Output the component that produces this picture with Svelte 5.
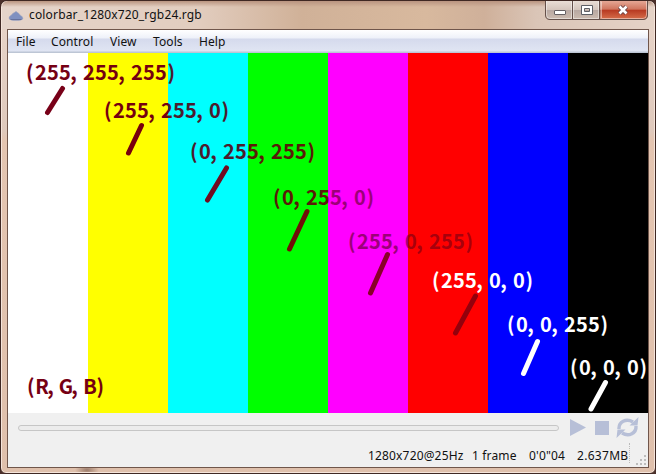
<script>
  const menus = [
    { name: 'File', w: 35 },
    { name: 'Control', w: 59 },
    { name: 'View', w: 43 },
    { name: 'Tools', w: 46 },
    { name: 'Help', w: 40 }
  ];
  const bars = ['#ffffff', '#ffff00', '#00ffff', '#00ff00', '#ff00ff', '#ff0000', '#0000ff', '#000000'];
  const inks = ['#750014', '#740010', '#4c1c2c', '#5a1a08', '#9c0078', '#a8000c', '#ffffff', '#ffffff'];
  const cell = 12;
  const labels = [
    { text: '(255,255,255)', x: 15, y: 27, line: [54.5, 35.5, 39.5, 59.5], ink: '#780018' },
    { text: '(255,255,0)', x: 93, y: 65, line: [133.5, 72.5, 120.5, 100], ink: '#78000c' },
    { text: '(0,255,255)', x: 179, y: 106, line: [218.5, 115, 199.5, 147], ink: '#700c20' },
    { text: '(0,255,0)', x: 262, y: 152, line: [299, 158.5, 281.5, 196], ink: '#701008' },
    { text: '(255,0,255)', x: 337, y: 196, line: [379.5, 201.5, 362.5, 240], ink: '#880028' },
    { text: '(255,0,0)', x: 421, y: 235, line: [467.5, 243, 447.5, 280], ink: '#94000c', white: true },
    { text: '(0,0,255)', x: 496, y: 279, line: [529.5, 288.5, 515.5, 320.5], ink: '#fff', white: true },
    { text: '(0,0,0)', x: 559, y: 322, line: [597.5, 329.5, 583, 356], ink: '#fff', white: true },
    { text: '(R,G,B)', x: 16, y: 341 }
  ];
  const nudge = { '(': 0.8, ')': -1.6, ',': -3.4 };
  const xs = (l) => [...l.text].map((c, i) => l.x + i * cell + 6 + (nudge[c] ?? 0)).join(' ');
</script>

<div class="window">
  <header class="title">
    <svg class="app" width="16" height="12" viewBox="0 0 16 12">
      <path d="M1 8.500 Q.5 6.500 3.500 5 Q4.500 3 6.500 2.500 Q8 .5 9.500 2.500 Q11 3 12 5 Q15 6.500 15 8.500 Q14.500 10.500 8 10.500 Q1.500 10.500 1 8.500Z" fill="#7f90c0" stroke="#a3a6c0" stroke-width=".6" />
      <path d="M2.500 9.500H13.500" stroke="#66719c" fill="none" />
    </svg>
    <span class="name">colorbar_1280x720_rgb24.rgb</span>
    <svg class="buttons" width="105" height="22" viewBox="0 0 105 22">
      <defs>
        <linearGradient id="plain" x2="0" y2="1">
          <stop offset="0" stop-color="#e9ddd5" /><stop offset=".46" stop-color="#d5c6bd" />
          <stop offset=".5" stop-color="#b8a8a2" /><stop offset="1" stop-color="#cdbcb0" />
        </linearGradient>
        <linearGradient id="close" x2="0" y2="1">
          <stop offset="0" stop-color="#e5a795" /><stop offset=".44" stop-color="#d0765f" />
          <stop offset=".5" stop-color="#b83a22" /><stop offset="1" stop-color="#d8704c" />
        </linearGradient>
      </defs>
      <path d="M1.500 0V14Q1.500 18.500 6 18.500H99Q103.500 18.500 103.500 14V0Z" fill="url(#plain)" />
      <path d="M56.500 0H103.500V14Q103.500 18.500 99 18.500H56.500Z" fill="url(#close)" />
      <path d="M2.500 0V14Q2.500 17.500 6 17.500H27.500V.5M29.500 .5V17.500H54.500V.5M57.500 .5V17.500H99Q102.500 17.500 102.500 14V0" fill="none" stroke="#fff" stroke-opacity=".45" />
      <path d="M1.500 0V14Q1.500 18.500 6 18.500H99Q103.500 18.500 103.500 14V0M28.500 0V18M55.500 0V18" fill="none" stroke="#65504a" />
      <rect x="10.500" y="9.500" width="11" height="4" rx=".5" fill="#fff" stroke="#655f62" />
      <path fill-rule="evenodd" d="M37.500 4.500H48.500V13.500H37.500ZM40.500 7.500V10.500H45.500V7.500Z" fill="#fff" stroke="#5d5f65" />
      <path d="M75.500 5.500L82.500 12.500M82.500 5.500L75.500 12.500" stroke="#6c4546" stroke-width="4.500" />
      <path d="M75.500 5.500L82.500 12.500M82.500 5.500L75.500 12.500" stroke="#fff" stroke-width="2.600" />
    </svg>
  </header>

  <main class="client">
    <nav>
      {#each menus as m}<span style:width="{m.w}px">{m.name}</span>{/each}
    </nav>

    <svg class="video" width="640" height="360" viewBox="0 0 640 360">
      <defs>
        <linearGradient id="ink" gradientUnits="userSpaceOnUse" x1="0" x2="640" y1="0" y2="0">
          {#each inks as c, i}
            <stop offset={i / 8} stop-color={c} /><stop offset={(i + 1) / 8} stop-color={c} />
          {/each}
        </linearGradient>
      </defs>
      {#each bars as c, i}<rect x={i * 80} width="80" height="360" fill={c} />{/each}
      {#each labels as l}
        <text x={xs(l)} y={l.y} fill={l.white ? '#fff' : 'url(#ink)'}>{l.text}</text>
        {#if l.line}
          <line x1={l.line[0]} y1={l.line[1]} x2={l.line[2]} y2={l.line[3]} stroke={l.ink} />
        {/if}
      {/each}
    </svg>

    <div class="controls">
      <div class="track"></div>
      <svg width="72" height="22" viewBox="0 0 72 22" fill="#b7bfd7">
        <path d="M1 2L17 10.500L1 19Z" />
        <rect x="26" y="4" width="14" height="14" />
        <g fill="none" stroke="#b7bfd7" stroke-width="3.400">
          <path d="M50 12C49.500 5 57 .8 64 5" />
          <path d="M67 9C67.500 16 60 20.200 53 16" />
        </g>
        <path d="M69.500 0L68.500 8.500H60.500ZM47.500 21L48.500 12.500H56.500Z" />
      </svg>
    </div>
    <footer>
      <span class="size">1280x720@25Hz</span>
      <span class="frames">1 frame</span>
      <span class="time">0'0"04</span>
      <span class="bytes">2.637MB</span>
      <svg class="grip" width="12" height="12" viewBox="0 0 12 12" fill="#bdbdbd">
        <path d="M8 0h2v2h-2zM4 4h2v2h-2zM8 4h2v2h-2zM0 8h2v2h-2zM4 8h2v2h-2zM8 8h2v2h-2z" />
      </svg>
    </footer>
  </main>
</div>

<style>
  :global(body) { background: #4a2f2a; }
  .window {
    box-sizing: border-box;
    width: 656px;
    height: 474px;
    padding: 0 7px;
    border: 1px solid #3f2823;
    border-radius: 7px 7px 6px 6px;
    box-shadow: inset 0 0 0 1px #f5e4da;
    background:
      radial-gradient(ellipse 12px 6px at 86px 469px, #9d7d6c, transparent),
      linear-gradient(#e8d5ca, #dfc9bc 130px, #e4c5b1 140px, #dfc0ac);
    font-family: 'Noto Sans', 'Open Sans', sans-serif;
    font-size: 12px;
    color: #111;
    overflow: hidden;
  }
  .title {
    display: flex;
    height: 28px;
    margin: 0 -6px;
    padding-left: 6px;
    background: linear-gradient(#b99480 0, transparent 6px), linear-gradient(90deg, #e5d4ca, #e2cdbf 30%, #d0b198 46%, #d8b99e 65%, #cfb09a 74%, #dac5b7 82%, #e5d3c7);
    border-radius: 6px 6px 0 0;
  }
  .app { margin: 9px 0 0 0; flex: none; }
  .name { margin: 4px 0 0 5px; line-height: 20px; white-space: nowrap; width: 180px; letter-spacing: .16px; }
  .buttons { margin: 0 5px 0 auto; flex: none; }
  .client {
    display: flex;
    flex-direction: column;
    width: 640px;
    height: 437px;
    box-shadow: 0 0 0 1px #70564b;
    margin-top: 1px;
    background: #f0f0f0;
  }
  nav {
    display: flex;
    box-sizing: border-box;
    height: 23px;
    padding-left: 8px;
    line-height: 24px;
    letter-spacing: .1px;
    background: linear-gradient(#fff, #eef1f9 8px, #d5daed 9px, #e0e5f3 21px, #bdc6d5 22px);
  }
  .video { display: block; flex: none; }
  text { font: 700 20px 'Noto Sans CJK SC', sans-serif; text-anchor: middle; }
  line { stroke-width: 5; stroke-linecap: round; }
  .controls { display: flex; height: 30px; align-items: center; padding-left: 10px; }
  .track { width: 539px; height: 4px; border: 1px solid #c6c6c6; border-radius: 4px; background: #ececec; margin-right: 10px; }
  .controls svg { flex: none; }
  footer { display: flex; height: 24px; padding-left: 360px; line-height: 26px; white-space: nowrap; letter-spacing: .16px; }
  .size { width: 104px; }
  .frames { width: 57px; }
  .time { width: 48px; }
  .bytes { width: 52px; height: 20px; border-right: 1px dotted #bbb; letter-spacing: .3px; }
  .grip { margin: 12px 0 0 6px; }
</style>
